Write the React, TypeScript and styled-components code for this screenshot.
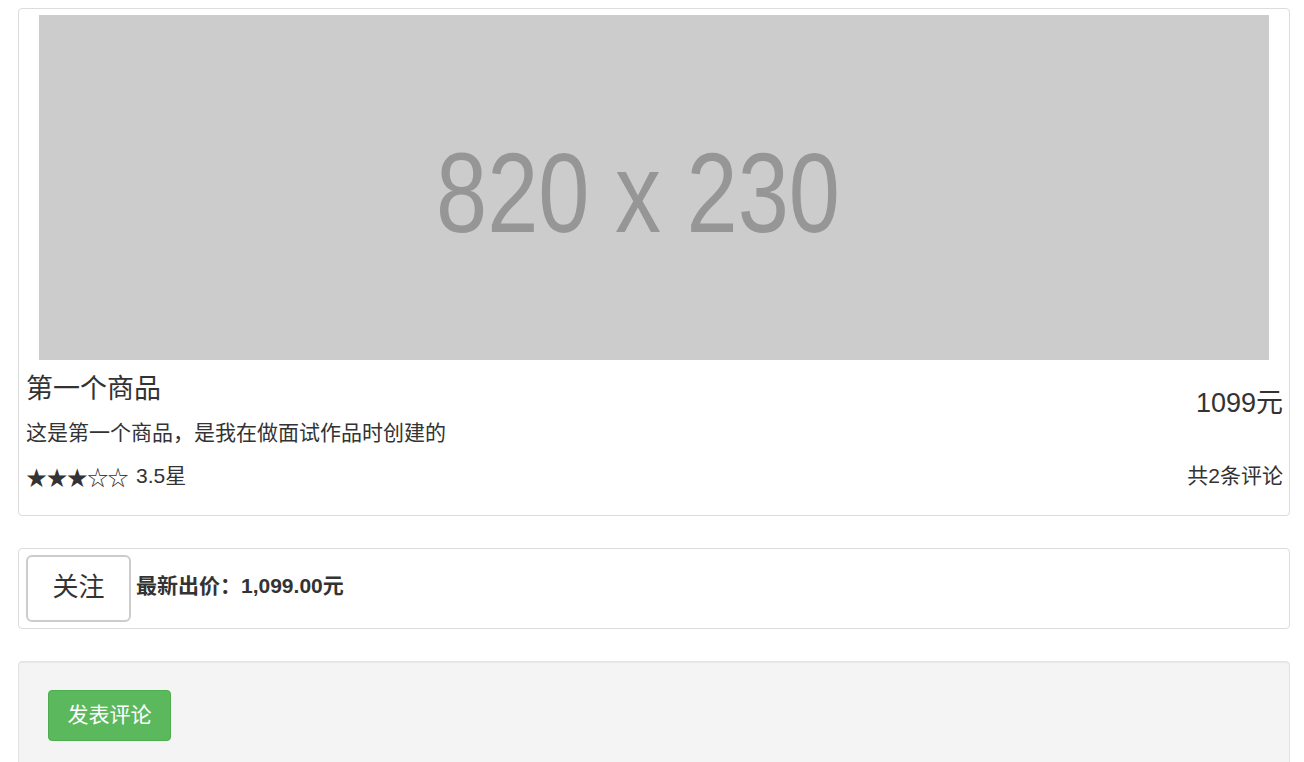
import React from "react";
import styled, { createGlobalStyle } from "styled-components";

const Global = createGlobalStyle`
  html, body { margin: 0; padding: 0; background: #fff; }
  body {
    font-family: "Liberation Sans", "Noto Sans CJK SC", sans-serif;
    color: #333;
  }
  * { box-sizing: border-box; }
`;

const Page = styled.div`
  display: flex;
  flex-direction: column;
  gap: 32px;
  padding: 8px 14px 0 18px;
`;

const Thumbnail = styled.div`
  border: 1px solid #dcdcdc;
  border-radius: 4px;
  padding: 6px 6px 0;
  background: #fff;
`;

const Placeholder = styled.svg`
  display: block;
  width: 1230px;
  height: 345px;
  margin: 0 auto;
`;

const Caption = styled.div`
  padding: 0 0 27px 1px;
  display: flex;
  flex-direction: column;
`;

const TopRow = styled.div`
  display: flex;
  justify-content: space-between;
  align-items: flex-start;
`;

const TitleBlock = styled.div`
  display: flex;
  flex-direction: column;
`;

const Title = styled.h3`
  margin: 14px 0 0;
  font-size: 27px;
  font-weight: normal;
  line-height: 30px;
`;

const Desc = styled.p`
  margin: 17px 0 0;
  font-size: 21px;
  line-height: 24px;
`;

const Price = styled.div`
  margin-top: 28px;
  font-size: 27px;
  line-height: 30px;
`;

const BottomRow = styled.div`
  display: flex;
  justify-content: space-between;
  align-items: center;
  margin-top: 19px;
  font-size: 21px;
  line-height: 24px;
`;

const Rating = styled.span`
  display: inline-flex;
  align-items: center;
  gap: 8px;
`;

const Stars = styled.span`
  font-family: "Noto Sans CJK SC", "DejaVu Sans", sans-serif;
  letter-spacing: -0.6px;
`;

const Panel = styled.div`
  border: 1px solid #dcdcdc;
  border-radius: 4px;
  padding: 6px 7px;
  display: flex;
  align-items: center;
  gap: 5px;
`;

const FollowButton = styled.button`
  width: 105px;
  height: 67px;
  background: #fff;
  border: 2px solid #ccc;
  border-radius: 6px;
  font-family: inherit;
  font-size: 26px;
  line-height: 30px;
  color: #333;
  padding: 0 0 4px;
  cursor: pointer;
`;

const Bid = styled.strong`
  font-size: 21px;
  line-height: 24px;
  font-weight: bold;
  padding-bottom: 5px;
`;

const Well = styled.div`
  background: #f4f4f4;
  border: 1px solid #e3e3e3;
  border-radius: 4px;
  box-shadow: inset 0 1px 1px rgba(0, 0, 0, 0.05);
  padding: 28px 29px;
`;

const SuccessButton = styled.button`
  width: 123px;
  height: 51px;
  background: #5cb85c;
  border: 1px solid #4cae4c;
  border-radius: 4px;
  color: #fff;
  font-family: inherit;
  font-size: 21px;
  line-height: 24px;
  padding: 0 0 2px;
  cursor: pointer;
`;

export default function App() {
  return (
    <>
      <Global />
      <Page>
        <Thumbnail>
          <Placeholder viewBox="0 0 1230 345">
            <rect width="1230" height="345" fill="#cccccc" />
            <text
              x="397"
              y="217"
              fontFamily="Liberation Sans, sans-serif"
              fontSize="114"
              fill="#969696"
              textLength="404"
              lengthAdjust="spacingAndGlyphs"
            >
              820 x 230
            </text>
          </Placeholder>
          <Caption>
            <TopRow>
              <TitleBlock>
                <Title>第一个商品</Title>
                <Desc>这是第一个商品，是我在做面试作品时创建的</Desc>
              </TitleBlock>
              <Price>1099元</Price>
            </TopRow>
            <BottomRow>
              <Rating>
                <Stars>★★★☆☆</Stars>
                <span>3.5星</span>
              </Rating>
              <span>共2条评论</span>
            </BottomRow>
          </Caption>
        </Thumbnail>
        <Panel>
          <FollowButton>关注</FollowButton>
          <Bid>最新出价：1,099.00元</Bid>
        </Panel>
        <Well>
          <SuccessButton>发表评论</SuccessButton>
        </Well>
      </Page>
    </>
  );
}
